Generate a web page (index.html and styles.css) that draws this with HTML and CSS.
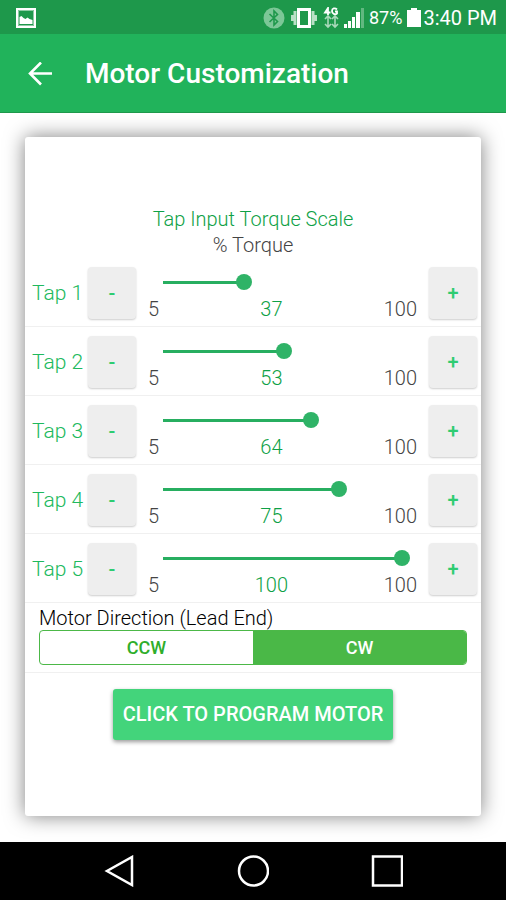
FILE: index.html
```html
<!DOCTYPE html>
<html lang="en">
<head>
<meta charset="utf-8">
<meta name="viewport" content="width=device-width, initial-scale=1">
<title>Motor Customization</title>
<link rel="stylesheet" href="styles.css">
</head>
<body>
<div class="status-bar">
  <svg class="status-picture" width="20" height="20" viewBox="0 0 20 20" aria-hidden="true">
    <path fill="#fff" fill-rule="evenodd" d="M0 0h20v20H0zM2 2v16h16V2z"/>
    <path fill="#fff" d="M3.500 16V9l2-1 2 2 2 1 2-1.500 2 1.500 3 1v4z"/>
    <path fill="none" stroke="#fff" stroke-opacity=".5" d="M2.500 2.500h15v15h-15z"/>
  </svg>
  <div class="status-icons">
    <svg width="22" height="22" viewBox="0 0 22 22" aria-hidden="true">
      <circle cx="11" cy="11" r="10.500" fill="#7cc797"/>
      <path fill="none" stroke="#1e984b" stroke-width="1.600" d="M6.500 7l8 7.500L11 18V4l3.500 3.500-8 7.500"/>
    </svg>
    <svg width="28" height="22" viewBox="0 0 28 22" aria-hidden="true">
      <path fill="#fff" fill-rule="evenodd" d="M7 1h14v20H7zM10 4v14h8V4z"/>
      <path fill="#b9e0c6" d="M3.500 4h3v14h-3zM21.500 4h3v14h-3zM1 8h2.500v6H1zM24.500 8H27v6h-2.500z"/>
    </svg>
    <svg width="16" height="22" viewBox="0 0 16 22" aria-hidden="true">
      <path fill="none" stroke="#fff" stroke-width="1.800" d="M5 8V1L2 5.500h5.500M14 2.500C12 .500 9 1 9 4s3 4 5 2.500V4.500h-2"/>
      <path fill="none" stroke="#a9d9ba" stroke-width="1.600" d="M5 9v11M2 12l3-3 3 3M2 17l3 3 3-3M12 9v11M9 12l3-3 3 3M9 17l3 3 3-3"/>
    </svg>
    <svg width="20" height="20" viewBox="0 0 20 20" aria-hidden="true">
      <path fill="#fff" d="M0 16h3v4H0zM4 13h3v7H4zM8 9h3v11H8zM12 4h4v16h-4z"/>
      <path fill="#61b880" d="M17 0h3v20h-3z"/>
    </svg>
    <span class="battery-level">87%</span>
    <svg width="14" height="19" viewBox="0 0 14 19" aria-hidden="true">
      <path fill="#fff" d="M4 0h6v2h4v17H0V2h4z"/>
    </svg>
    <span class="clock">3:40 PM</span>
  </div>
</div>

<header class="app-bar">
  <button class="back" type="button" aria-label="Back">
    <svg width="24" height="24" viewBox="0 0 24 24" aria-hidden="true">
      <path fill="none" stroke="#fff" stroke-width="2.600" d="M24 11.500H2.500M13 .500l-11 11 11 11"/>
    </svg>
  </button>
  <h1 class="app-title">Motor Customization</h1>
</header>

<main class="page">
  <section class="card">
    <h2 class="scale-title">Tap Input Torque Scale</h2>
    <p class="scale-unit">% Torque</p>

    <div class="tap">
      <label class="tap-name" for="tap1">Tap 1</label>
      <button class="step" type="button" aria-label="Decrease tap 1">-</button>
      <div class="tap-scale">
        <input class="slider" id="tap1" type="range" min="5" max="100" value="37" style="--value: 37">
        <div class="tap-values"><span>5</span><output class="tap-value" for="tap1">37</output><span>100</span></div>
      </div>
      <button class="step" type="button" aria-label="Increase tap 1">+</button>
    </div>
    <div class="tap">
      <label class="tap-name" for="tap2">Tap 2</label>
      <button class="step" type="button" aria-label="Decrease tap 2">-</button>
      <div class="tap-scale">
        <input class="slider" id="tap2" type="range" min="5" max="100" value="53" style="--value: 53">
        <div class="tap-values"><span>5</span><output class="tap-value" for="tap2">53</output><span>100</span></div>
      </div>
      <button class="step" type="button" aria-label="Increase tap 2">+</button>
    </div>
    <div class="tap">
      <label class="tap-name" for="tap3">Tap 3</label>
      <button class="step" type="button" aria-label="Decrease tap 3">-</button>
      <div class="tap-scale">
        <input class="slider" id="tap3" type="range" min="5" max="100" value="64" style="--value: 64">
        <div class="tap-values"><span>5</span><output class="tap-value" for="tap3">64</output><span>100</span></div>
      </div>
      <button class="step" type="button" aria-label="Increase tap 3">+</button>
    </div>
    <div class="tap">
      <label class="tap-name" for="tap4">Tap 4</label>
      <button class="step" type="button" aria-label="Decrease tap 4">-</button>
      <div class="tap-scale">
        <input class="slider" id="tap4" type="range" min="5" max="100" value="75" style="--value: 75">
        <div class="tap-values"><span>5</span><output class="tap-value" for="tap4">75</output><span>100</span></div>
      </div>
      <button class="step" type="button" aria-label="Increase tap 4">+</button>
    </div>
    <div class="tap">
      <label class="tap-name" for="tap5">Tap 5</label>
      <button class="step" type="button" aria-label="Decrease tap 5">-</button>
      <div class="tap-scale">
        <input class="slider" id="tap5" type="range" min="5" max="100" value="100" style="--value: 100">
        <div class="tap-values"><span>5</span><output class="tap-value" for="tap5">100</output><span>100</span></div>
      </div>
      <button class="step" type="button" aria-label="Increase tap 5">+</button>
    </div>

    <fieldset class="direction">
      <legend class="direction-title">Motor Direction (Lead End)</legend>
      <div class="segments">
        <label class="segment"><input class="segment-input" type="radio" name="direction" value="ccw">CCW</label>
        <label class="segment"><input class="segment-input" type="radio" name="direction" value="cw" checked>CW</label>
      </div>
    </fieldset>

    <button class="program" type="button">CLICK TO PROGRAM MOTOR</button>
  </section>
</main>

<nav class="nav-bar" aria-label="System">
  <button class="nav-button" type="button" aria-label="Back">
    <svg width="32" height="32" viewBox="0 0 32 32" aria-hidden="true"><path fill="none" stroke="#fff" stroke-width="2.500" d="M29 2v28L4 16z"/></svg>
  </button>
  <button class="nav-button" type="button" aria-label="Home">
    <svg width="32" height="32" viewBox="0 0 32 32" aria-hidden="true"><circle cx="16.500" cy="16" r="14.500" fill="none" stroke="#fff" stroke-width="2.500"/></svg>
  </button>
  <button class="nav-button" type="button" aria-label="Recent apps">
    <svg width="32" height="32" viewBox="0 0 32 32" aria-hidden="true"><path fill="none" stroke="#fff" stroke-width="2.500" d="M2 1.500h29v29H2z"/></svg>
  </button>
</nav>
</body>
</html>
```
FILE: styles.css
```css
* {
  box-sizing: border-box;
}

body {
  margin: 0;
  min-height: 100vh;
  display: flex;
  flex-direction: column;
  background: #fff;
  color: #212121;
  font-family: Roboto, "Liberation Sans", sans-serif;
  font-size: 20px;
  font-weight: 300;
  line-height: 24px;
}

button {
  margin: 0;
  padding: 0;
  border: 0;
  background: none;
  color: inherit;
  font: inherit;
}

svg {
  display: block;
}

.status-bar {
  display: flex;
  align-items: center;
  justify-content: space-between;
  height: 34px;
  padding: 1px 9px 0 16px;
  background: #1e984b;
  color: #fff;
  font-weight: 400;
}

.status-icons {
  display: flex;
  align-items: center;
  gap: 5px;
}

.battery-level {
  font-size: 18px;
}

.clock {
  margin-left: -3px;
}

.app-bar {
  display: flex;
  align-items: center;
  gap: 33px;
  height: 79px;
  padding: 2px 28px 0;
  border-bottom: 1px solid #1e984b;
  background: #21b35b;
  color: #fff;
}

.app-title {
  margin: 0;
  font-size: 28px;
  font-weight: 500;
  line-height: 32px;
}

.page {
  flex: 1;
  display: flex;
  flex-direction: column;
  padding: 24px 25px 26px;
}

.card {
  flex: 1;
  display: flex;
  flex-direction: column;
  padding: 69px 0 76px;
  border-radius: 3px;
  background: #fff;
  box-shadow: 0 0 20px rgba(0, 0, 0, 0.5);
}

.scale-title,
.scale-unit {
  margin: 0;
  font-size: 20px;
  font-weight: 300;
  line-height: 26px;
  text-align: center;
}

.scale-title {
  color: #0ea146;
}

.scale-unit {
  color: #444;
}

.tap {
  display: flex;
  align-items: center;
  padding: 9px 4px 7px 7px;
  border-bottom: 1px solid #f0f0f0;
}

.tap-name {
  width: 56px;
  font-size: 21px;
  color: #20b95d;
}

.step {
  width: 48px;
  height: 52px;
  border-radius: 4px;
  background: #eee;
  box-shadow: 0 1px 2px rgba(0, 0, 0, 0.2);
  color: #2ecc71;
  font-weight: 500;
}

.tap-scale {
  flex: 1;
  align-self: flex-end;
  min-width: 0;
  padding: 0 12px;
}

.slider {
  display: block;
  width: calc(100% - 14px);
  height: 16px;
  margin: 0 7px 9px;
  appearance: none;
  background: linear-gradient(#27ae60, #27ae60) no-repeat 8px center / calc((100% - 16px) * (var(--value) - 5) / 95) 3px;
}

.slider::-webkit-slider-thumb {
  appearance: none;
  width: 16px;
  height: 16px;
  border-radius: 50%;
  background: #2fb367;
}

.tap-values {
  display: flex;
  justify-content: space-between;
  line-height: 20px;
  color: #444;
}

.tap-value {
  color: #0ea146;
}

.direction {
  margin: 0;
  padding: 0 14px 7px;
  border: 0;
  border-bottom: 1px solid #f0f0f0;
}

.direction-title {
  padding: 3px 0 0;
  color: #000;
}

.segments {
  display: flex;
  overflow: hidden;
  border: 1px solid #4cb848;
  border-radius: 4px;
}

.segment {
  flex: 1;
  color: #2fae2b;
  font-size: 18px;
  font-weight: 500;
  line-height: 33px;
  text-align: center;
}

.segment:has(:checked) {
  background: #4ab847;
  color: #fff;
}

.segment-input {
  position: absolute;
  opacity: 0;
}

.program {
  align-self: center;
  margin-top: 16px;
  padding: 0 10px;
  border-radius: 3px;
  background: #43d47b;
  box-shadow: 0 2px 4px rgba(0, 0, 0, 0.4);
  color: #fff;
  font-weight: 500;
  line-height: 51px;
}

.nav-bar {
  display: flex;
  justify-content: center;
  gap: 102px;
  padding: 13px 0;
  background: #000;
}
```
